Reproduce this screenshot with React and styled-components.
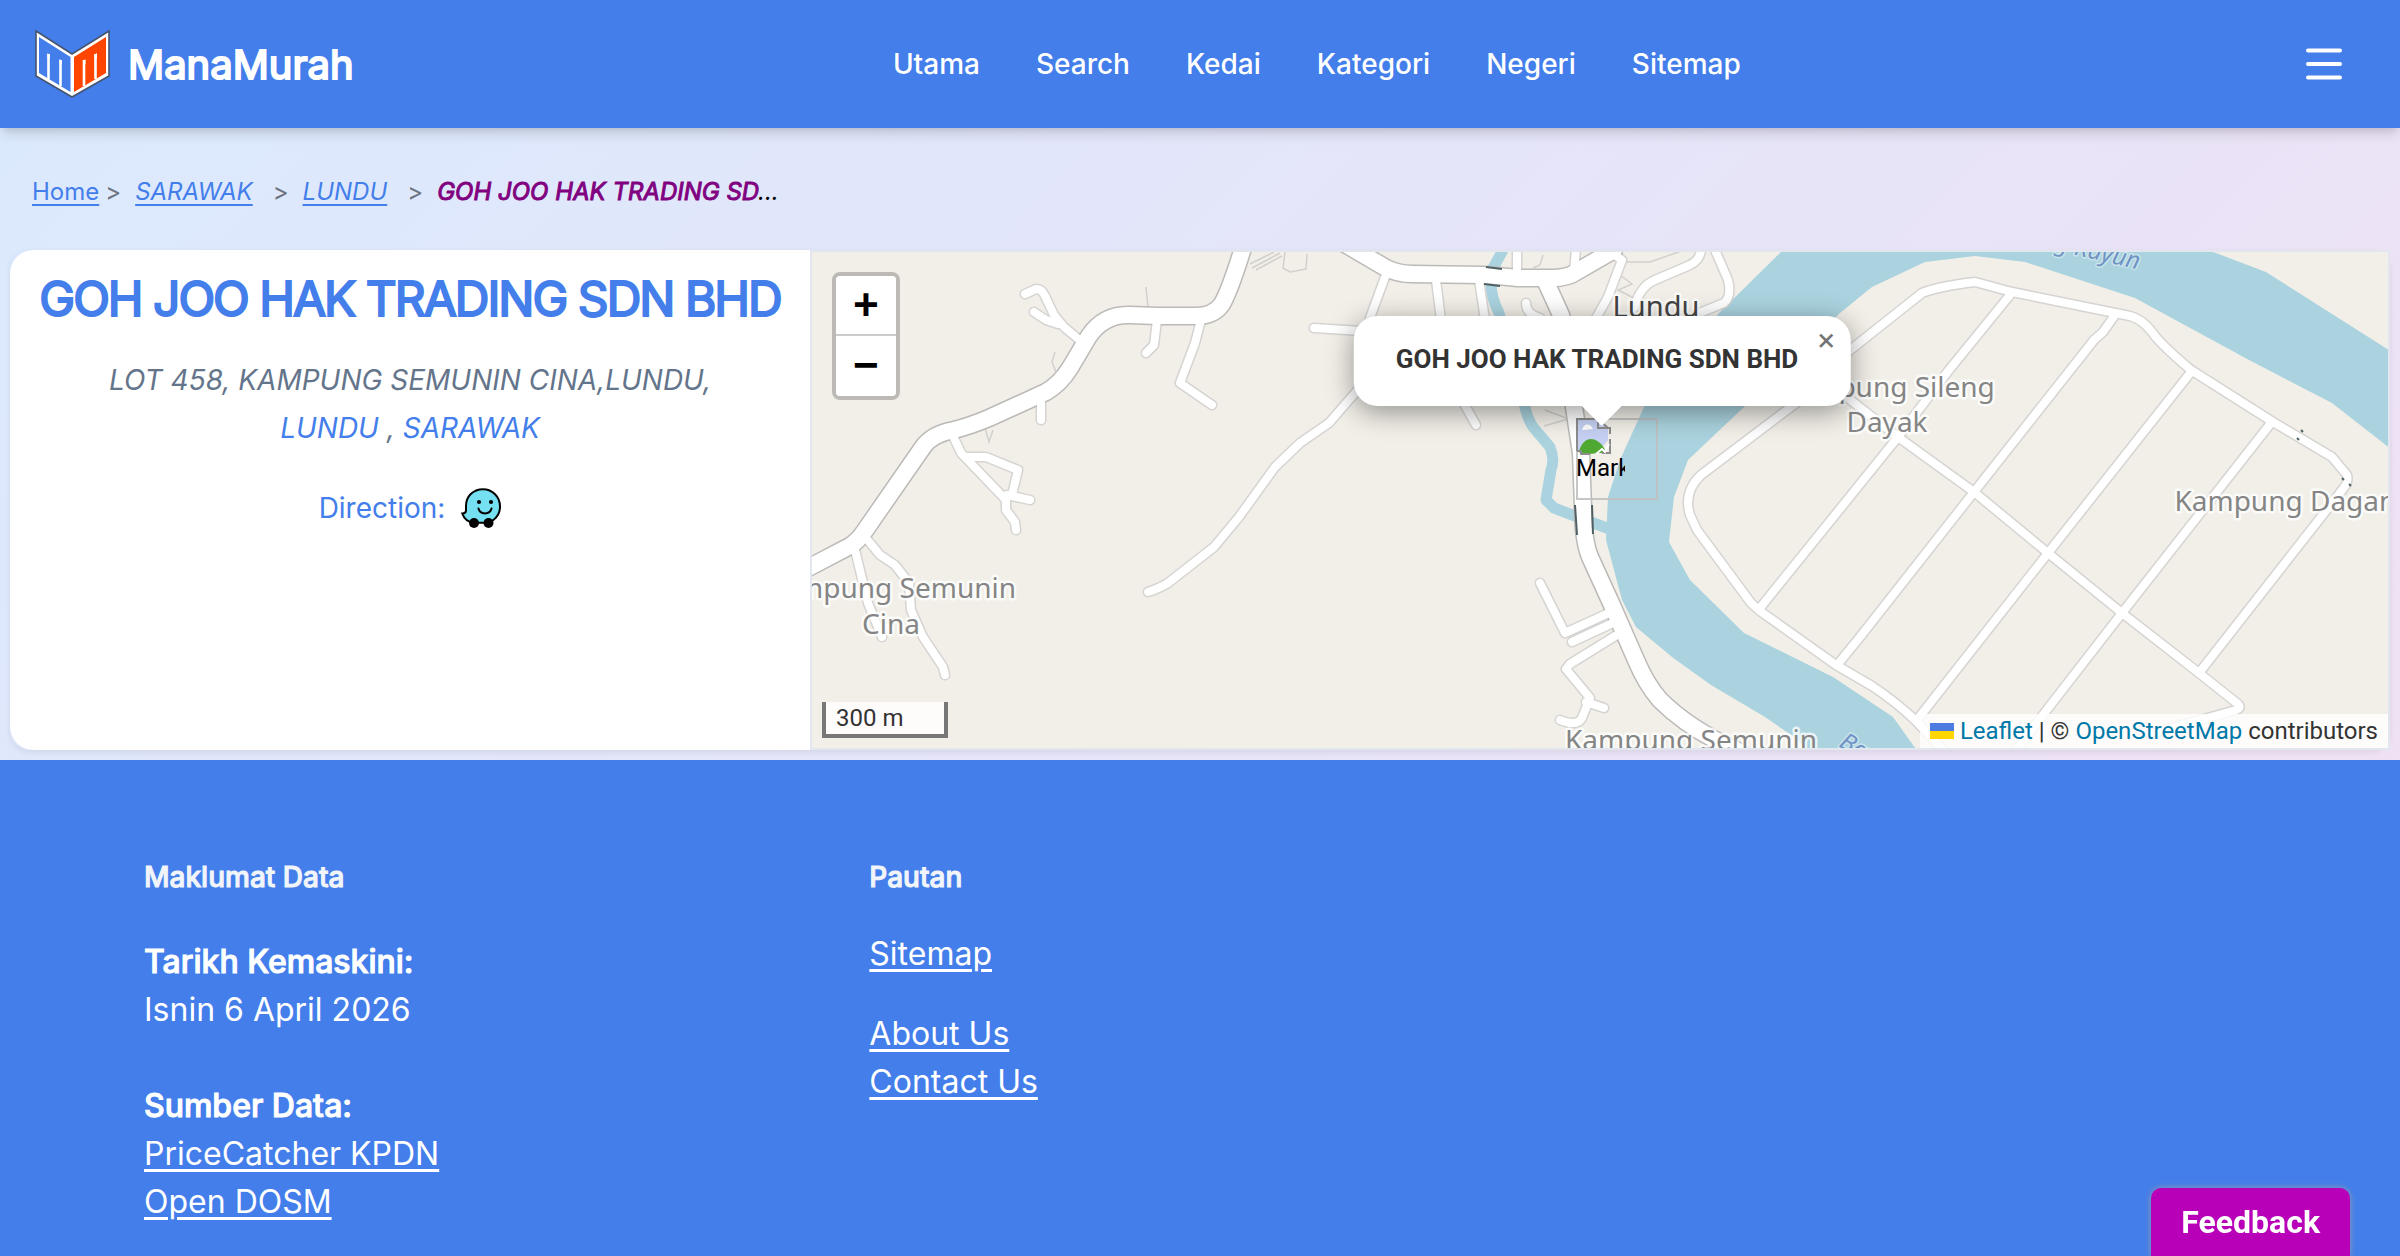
import React from "react";
import styled, { createGlobalStyle, css } from "styled-components";

const blue = "#437eeb";
const ui = `Inter, "Noto Sans", sans-serif`;
const mapUi = `Roboto, "Liberation Sans", sans-serif`;

/* Bold drawn on a lighter cut, so that it keeps the lighter cut's widths. */
const heavy = css`
  font-weight: ${(p) => p.$weight || 400};
  -webkit-text-stroke: ${(p) => p.$stroke || 1}px currentColor;
`;

const GlobalStyle = createGlobalStyle`
  *, *::before, *::after { box-sizing: border-box; }
  body { margin: 0; font-family: ${ui}; color: #000; }
  h1, h2, p, ol, ul, address { margin: 0; padding: 0; }
  ol, ul { list-style: none; }
`;

const Page = styled.div`
  min-height: 100vh;
  display: flex;
  flex-direction: column;
  background: linear-gradient(135deg, #dbeafe 0%, #e0e7fb 25%, #f3e0f3 100%);
`;

const Header = styled.header`
  height: 128px;
  padding: 0 32px;
  display: flex;
  justify-content: space-between;
  align-items: center;
  background: ${blue};
  box-shadow: 0 8px 12px -2px rgba(0, 0, 0, 0.12), 0 4px 8px -4px rgba(0, 0, 0, 0.12);
`;

const Brand = styled.a`
  display: flex;
  align-items: center;
  gap: 16px;
  color: #fff;
  font-size: 40px;
  text-decoration: none;
  ${heavy}
`;

const Nav = styled.nav`
  display: flex;
  gap: 56px;
`;

const NavLink = styled.a`
  color: #fff;
  font-size: 28px;
  font-weight: 500;
  line-height: 40px;
  text-decoration: none;
`;

const MenuButton = styled.button`
  display: flex;
  padding: 0 24px;
  border: 0;
  background: none;
  color: #fff;
  cursor: pointer;
`;

const Breadcrumb = styled.nav`
  padding: 44px 32px 38px;
  font-size: 24px;
  line-height: 40px;
`;

const Crumbs = styled.ol`
  display: flex;
`;

const Crumb = styled.li`
  font-style: ${(p) => (p.$italic ? "italic" : "normal")};
  &:not(:first-child)::before {
    content: ">";
    margin: 0 14px 0 ${(p) => (p.$first ? 6 : 20)}px;
    color: #6b7280;
    font-style: normal;
  }
`;

const CrumbLink = styled.a`
  color: ${blue};
  text-underline-offset: 4px;
`;

const CurrentCrumb = styled.span`
  color: #000;
  b {
    color: purple;
    ${heavy}
  }
`;

const Shop = styled.main`
  display: flex;
  margin: 0 10px 10px;
  border-radius: 20px;
  box-shadow: 0 2px 6px rgba(0, 0, 0, 0.08);
`;

const ShopCard = styled.section`
  flex: 0 0 calc(100vw / 3);
  min-width: 0;
  padding: 16px;
  border-radius: 24px 0 0 24px;
  background: #fff;
  text-align: center;
`;

const ShopName = styled.h1`
  color: ${blue};
  font-size: 48px;
  line-height: 66px;
  letter-spacing: -2px;
  white-space: nowrap;
  ${heavy}
`;

const Address = styled.address`
  margin-top: 24px;
  color: #64748b;
  font-size: 28px;
  line-height: 48px;
  a {
    color: ${blue};
    text-decoration: none;
  }
`;

const Direction = styled.p`
  margin-top: 32px;
  display: flex;
  align-items: center;
  justify-content: center;
  gap: 16px;
  color: ${blue};
  font-size: 28px;
  line-height: 48px;
  a {
    display: flex;
  }
`;

const MapFrame = styled.section`
  position: relative;
  flex: 1;
  height: 500px;
  border: 2px solid #e2e6ee;
  overflow: hidden;
  background: #f2efe8;
  font-family: ${mapUi};
  font-size: 24px;
`;

const MapDrawing = styled.svg`
  display: block;
  width: 100%;
  height: 100%;
`;

const ZoomControl = styled.div`
  position: absolute;
  top: 20px;
  left: 20px;
  border: 4px solid rgba(0, 0, 0, 0.22);
  border-radius: 8px;
  background-clip: padding-box;
`;

const ZoomButton = styled.button`
  display: block;
  width: 60px;
  height: 60px;
  padding: 4px 0 0;
  border: 0;
  border-radius: ${(p) => (p.$top ? "4px 4px 0 0" : "0 0 4px 4px")};
  ${(p) =>
    p.$top &&
    css`
      border-bottom: 2px solid #ccc;
    `}
  background: #fff;
  color: #000;
  font: bold 44px/56px "Liberation Mono", monospace;
  cursor: pointer;
`;

const Scale = styled.div`
  position: absolute;
  left: 10px;
  bottom: 10px;
  width: 126px;
  height: 36px;
  padding: 0 10px;
  border: 4px solid #777;
  border-top: 0;
  background: rgba(255, 255, 255, 0.8);
  color: #333;
  line-height: 32px;
`;

const Attribution = styled.div`
  position: absolute;
  right: 0;
  bottom: 0;
  padding: 0 10px;
  background: rgba(255, 255, 255, 0.8);
  color: #333;
  line-height: 34px;
  a {
    color: #0078a8;
    text-decoration: none;
  }
  svg {
    margin-right: 6px;
  }
`;

const Marker = styled.div`
  position: absolute;
  top: 166px;
  left: calc(50% - 24px);
  width: 82px;
  height: 82px;
  border: 2px solid rgba(192, 192, 192, 0.9);
  color: #000;
  line-height: 28px;
  svg {
    display: block;
    margin: -2px 0 -2px -2px;
  }
`;

const MarkerAlt = styled.span`
  display: block;
  width: 49px;
  margin-left: -2px;
  overflow: hidden;
`;

const Popup = styled.div`
  position: absolute;
  top: 64px;
  left: calc(50% + 2px);
  transform: translateX(-50%);
  padding: 24px 52px 28px 42px;
  border-radius: 24px;
  background: #fff;
  box-shadow: 0 6px 28px rgba(0, 0, 0, 0.4);
  color: #333;
  font-size: 26px;
  font-weight: 700;
  line-height: 38px;
  white-space: nowrap;
  &::after {
    content: "";
    position: absolute;
    top: 100%;
    left: calc(50% - 20px);
    border: 20px solid transparent;
    border-top-color: #fff;
    border-bottom: 0;
  }
`;

const CloseButton = styled.button`
  position: absolute;
  top: 0;
  right: 0;
  width: 48px;
  height: 48px;
  padding: 0;
  border: 0;
  background: none;
  color: #757575;
  font: 32px/48px ${mapUi};
  cursor: pointer;
`;

const Footer = styled.footer`
  flex: 1;
  display: grid;
  grid-template-columns: repeat(3, 1fr);
  align-content: start;
  gap: 64px;
  padding: 96px 144px 24px;
  background: ${blue};
  color: #fff;
  font-size: 32px;
  line-height: 48px;
`;

const FooterTitle = styled.h2`
  margin-bottom: ${(p) => p.$space}px;
  color: #f1f5f9;
  font-size: 28px;
  line-height: 42px;
  ${heavy}
`;

const FooterBlock = styled.div`
  display: flex;
  flex-direction: column;
  align-items: flex-start;
  &:not(:first-of-type) {
    margin-top: ${(p) => p.$gap}px;
  }
`;

const FooterLabel = styled.strong`
  ${heavy}
`;

const FooterLink = styled.a`
  color: #fff;
  text-underline-offset: 4px;
`;

const FeedbackButton = styled.button`
  position: fixed;
  right: 50px;
  bottom: 0;
  height: 68px;
  padding: 0 30px;
  border: 0;
  border-radius: 10px 10px 0 0;
  background: #b800b8;
  box-shadow: 0 0 6px rgba(160, 160, 160, 0.9);
  color: #fff;
  font: 700 32px/68px ${mapUi};
  cursor: pointer;
`;

const Logo = () => (
  <svg width="80" height="72" viewBox="0 1 80 72" aria-hidden="true">
    <path d="M4 4 40 27 77 4V49L40 70 4 49Z" fill="#fff" stroke="#45556f" strokeWidth="1.6" />
    <path d="M7 10 38.500 30V65L7 46Z" fill={blue} />
    <path d="M42 30 74 10V46L42 65Z" fill="#ff4500" />
    <path d="M16.500 52V27M28.500 59V33M52 59V33M63.500 52V27" stroke="#fff" strokeWidth="2.600" />
    <path d="M15.500 26 18 28V31H15.500ZM27.500 32 30 34V37H27.500ZM53.500 32 51 34V37H53.500ZM65 26 62.500 28V31H65Z" fill="#fff" />
  </svg>
);

const MenuIcon = () => (
  <svg width="40" height="32" viewBox="0 0 40 32" aria-hidden="true">
    <path d="M4 2.500H36M4 16H36M4 29.500H36" stroke="currentColor" strokeWidth="4" strokeLinecap="round" />
  </svg>
);

const WazeIcon = () => (
  <svg width="40" height="40" viewBox="0 0 40 40" aria-hidden="true">
    <path
      d="M22 1.200C12 1.200 5 8.500 5 18V22.500C5 24.500 3.500 25.500 1.300 25.500 3 30.500 7 34 12.500 34.800H24C32.500 34.500 39 27.500 39 18.500 39 9 31.500 1.200 22 1.200Z"
      fill="#75e0f2"
      stroke="#000"
      strokeWidth="2"
    />
    <circle cx="13" cy="35" r="5" />
    <circle cx="27.500" cy="35" r="5" />
    <circle cx="18" cy="14" r="2.100" />
    <circle cx="30" cy="14" r="2.100" />
    <path d="M17.500 20.500C19 27 29 27 30.500 20.500" fill="none" stroke="#000" strokeWidth="2" strokeLinecap="round" />
  </svg>
);

const BrokenImage = () => (
  <svg width="36" height="38" viewBox="0 0 36 38" aria-hidden="true">
    <path d="M1 1H22L32 10V22L22 34H1Z" fill="#c5d0f2" />
    <path d="M6 12C8 5 14 5 17 11Z" fill="#fff" />
    <path d="M3 34C5 25 10 21 15 21S26 25 29 32L26 35H22L14 36H5Z" fill="#4fa832" />
    <path d="M1 33V1H22V10H34V16M34 21V35H26M1 33H5V36H14M22 1 32 10" fill="none" stroke="#8c8c8c" strokeWidth="2" />
    <path d="M20 36 26 31 29 34 33 26" stroke="#fff" strokeWidth="2" fill="none" />
  </svg>
);

const Flag = () => (
  <svg width="24" height="16" viewBox="0 0 12 8" aria-hidden="true">
    <path fill="#4c7be1" d="M0 0h12v4H0z" />
    <path fill="#ffd500" d="M0 4h12v4H0z" />
  </svg>
);

const mainRoads = [
  "M806 569 850 546Q858 541 864 532L923 447Q932 434 954 430 970 426 989 418L1046 392Q1060 384 1070 368L1089 336Q1104 314 1130 315L1157 316H1196Q1214 316 1222 304 1230 290 1243 248",
  "M1345 244 1386 268Q1398 274 1412 274L1483 275Q1500 276 1518 278H1552Q1568 278 1576 272L1614 250",
  "M1545 280 1561 315 1574 370V407L1581 453 1583 507Q1583 540 1590 557L1611 603 1636 660Q1646 684 1660 700 1690 730 1740 752",
];

const sideRoads = [
  "M1025 294 1036 289Q1042 289 1045 296L1054 315 1064 327 1082 342",
  "M1034 312 1046 320 1058 324",
  "M1157 320 1154 345 1146 353",
  "M1201 320 1195 343 1180 383 1212 405",
  "M1041 398V420",
  "M954 438 961 453 1006 500V510L1015 522 1016 530",
  "M966 457H986L1018 470 1012 495M1007 495 1030 500",
  "M866 538 880 555 895 565 909 583 911 610 923 637 943 667 945 675",
  "M855 550 868 603 882 637",
  "M1148 592Q1160 588 1168 583L1214 547 1239 517 1275 467 1300 443 1329 423 1362 385",
  "M1314 328 1362 331",
  "M1385 277 1370 318M1436 280 1441 320M1479 280 1485 320",
  "M1526 303Q1526 314 1540 318",
  "M1517 250V272M1576 250 1574 270M1611 253 1622 260 1608 297 1595 320",
  "M1701 250Q1700 260 1690 265L1655 280Q1640 286 1634 308",
  "M1715 250 1728 280Q1732 296 1724 303L1697 314",
  "M1462 400 1476 425",
  "M1540 583 1565 633 1611 612M1572 642 1615 622M1620 633 1570 664 1566 669 1590 698 1582 718Q1577 727 1560 720M1586 702 1604 708",
  "M1830 366 1922 293Q1940 286 1975 282L2012 292 2130 316Q2142 319 2152 332 2160 344 2191 370L2273 422 2332 457 2347 475Q2349 482 2343 489L2199 673",
  "M1800 400 1701 475Q1683 492 1690 515L1697 530 1751 603 1760 611 1836 665 1872 686Q1896 702 1915 720L1945 752",
  "M2010 295 1949 370 1898 437 1760 608",
  "M2115 315 2103 332 2094 340 1974 492 1860 637 1838 664",
  "M2191 372 2048 553 1917 720",
  "M2271 423 2122 613 2039 720 2015 752",
  "M1835 388 1898 437 1974 492 2048 553 2122 613 2199 673 2238 704Q2242 708 2236 710L2150 734",
];

const places = [
  { text: "Kampung Semunin", x: 890, y: 598 },
  { text: "Cina", x: 891, y: 634 },
  { text: "Kampung Semunin", x: 1691, y: 750 },
  { text: "Kampung Sileng", x: 1887, y: 397 },
  { text: "Dayak", x: 1887, y: 432 },
  { text: "Kampung Dagang", x: 2294, y: 511 },
];

const MapTiles = () => (
  <MapDrawing viewBox="812 252 1576 496" preserveAspectRatio="xMidYMid slice" role="img" aria-label="Map of Lundu">
    <path
      d="M1783 250 1719 313 1644 407 1620 460 1608 497 1606 540 1622 600 1636 627 1672 657 1711 685 1765 717 1794 737 1810 752H1918L1893 717 1860 695 1833 677 1744 633 1690 580 1669 542 1674 497 1688 460 1744 407 1840 313 1872 287 1925 262 1975 256 2025 262 2135 298 2249 360 2332 403 2392 450V352L2266 272 2208 250Z"
      fill="#aad3df"
    />
    <path
      d="M1503 250 1492 270Q1488 292 1499 313L1524 403Q1527 418 1533 427L1550 447Q1555 460 1551 470L1546 500 1554 508 1612 530"
      fill="none"
      stroke="#aad3df"
      strokeWidth="11"
      strokeLinejoin="round"
    />
    <g fill="none" stroke="#d2d0cd" strokeWidth="1.500">
      <path d="M1250 264 1274 252M1252 268 1280 253M1256 270 1282 256M1285 252 1283 268 1290 272 1306 269 1307 254M1146 287 1148 308M1055 352 1052 362 1056 372M985 428 989 442 993 430" />
      <path d="M1533 268 1540 265 1543 255M1625 262 1650 262 1690 248M1620 275 1632 284 1618 290 1634 298M1545 410 1566 418M1544 426 1572 418" />
    </g>
    <g fill="none" strokeLinecap="round" strokeLinejoin="round">
      {sideRoads.map((d) => (
        <path key={d} d={d} stroke="#d6d4d2" strokeWidth="11" />
      ))}
      {mainRoads.map((d) => (
        <path key={d} d={d} stroke="#bcbab8" strokeWidth="19" />
      ))}
      {sideRoads.map((d) => (
        <path key={d} d={d} stroke="#fff" strokeWidth="8" />
      ))}
      {mainRoads.map((d) => (
        <path key={d} d={d} stroke="#fff" strokeWidth="16" />
      ))}
    </g>
    <path
      d="M1486 267 1502 269M1484 284 1500 286M1575 505 1577 535M1592 505 1593 534M2301 430 2303 432M2297 438 2299 440M2342 478 2344 480M2349 484 2351 486"
      stroke="#4f6065"
      strokeWidth="2"
      fill="none"
    />
    <g
      fontFamily='"Noto Sans", sans-serif'
      fontSize="28"
      textAnchor="middle"
      paintOrder="stroke"
      stroke="rgba(255,255,255,0.75)"
      strokeWidth="5"
      strokeLinejoin="round"
    >
      {places.map((p) => (
        <text key={p.x + "-" + p.y} x={p.x} y={p.y} fill="#858585">
          {p.text}
        </text>
      ))}
      <text x="1656" y="317" fontSize="29" fill="#444">
        Lundu
      </text>
      <g fill="#6f93c4" fontSize="24" fontStyle="italic" stroke="rgba(255,255,255,0.4)" strokeWidth="3">
        <text transform="translate(2054 250) rotate(13)" textAnchor="start" x="0" y="0">
          g Kayun
        </text>
        <text transform="translate(1838 746) rotate(30)" textAnchor="start" x="0" y="0">
          Ba
        </text>
      </g>
    </g>
  </MapDrawing>
);

const navItems = ["Utama", "Search", "Kedai", "Kategori", "Negeri", "Sitemap"];

export default function App() {
  return (
    <>
      <GlobalStyle />
      <Page>
        <Header>
          <Brand href="#" $stroke={2}>
            <Logo />
            ManaMurah
          </Brand>
          <Nav aria-label="Main">
            {navItems.map((item) => (
              <NavLink key={item} href="#">
                {item}
              </NavLink>
            ))}
          </Nav>
          <MenuButton type="button" aria-label="Menu">
            <MenuIcon />
          </MenuButton>
        </Header>

        <Breadcrumb aria-label="Breadcrumb">
          <Crumbs>
            <Crumb>
              <CrumbLink href="#">Home</CrumbLink>
            </Crumb>
            <Crumb $italic $first>
              <CrumbLink href="#">SARAWAK</CrumbLink>
            </Crumb>
            <Crumb $italic>
              <CrumbLink href="#">LUNDU</CrumbLink>
            </Crumb>
            <Crumb $italic>
              <CurrentCrumb>
                <b>GOH JOO HAK TRADING SD</b>...
              </CurrentCrumb>
            </Crumb>
          </Crumbs>
        </Breadcrumb>

        <Shop>
          <ShopCard>
            <ShopName $stroke={2}>GOH JOO HAK TRADING SDN BHD</ShopName>
            <Address>
              LOT 458, KAMPUNG SEMUNIN CINA,LUNDU,
              <br />
              <a href="#">LUNDU</a> , <a href="#">SARAWAK</a>
            </Address>
            <Direction>
              Direction:
              <a href="#" aria-label="Waze">
                <WazeIcon />
              </a>
            </Direction>
          </ShopCard>
          <MapFrame aria-label="Map">
            <MapTiles />
            <Marker>
              <BrokenImage />
              <MarkerAlt>Marker</MarkerAlt>
            </Marker>
            <Popup>
              GOH JOO HAK TRADING SDN BHD
              <CloseButton type="button" aria-label="Close popup">
                ×
              </CloseButton>
            </Popup>
            <ZoomControl>
              <ZoomButton type="button" $top aria-label="Zoom in">
                +
              </ZoomButton>
              <ZoomButton type="button" aria-label="Zoom out">
                −
              </ZoomButton>
            </ZoomControl>
            <Scale>300 m</Scale>
            <Attribution>
              <a href="#">
                <Flag />
                Leaflet
              </a>{" "}
              | © <a href="#">OpenStreetMap</a> contributors
            </Attribution>
          </MapFrame>
        </Shop>

        <Footer>
          <section>
            <FooterTitle $weight={500} $space={40}>
              Maklumat Data
            </FooterTitle>
            <FooterBlock>
              <FooterLabel $weight={500}>Tarikh Kemaskini:</FooterLabel>
              <span>Isnin 6 April 2026</span>
            </FooterBlock>
            <FooterBlock $gap={48}>
              <FooterLabel $weight={500}>Sumber Data:</FooterLabel>
              <FooterLink href="#">PriceCatcher KPDN</FooterLink>
              <FooterLink href="#">Open DOSM</FooterLink>
            </FooterBlock>
          </section>
          <section>
            <FooterTitle $weight={500} $space={32}>
              Pautan
            </FooterTitle>
            <FooterBlock>
              <FooterLink href="#">Sitemap</FooterLink>
            </FooterBlock>
            <FooterBlock $gap={32}>
              <FooterLink href="#">About Us</FooterLink>
              <FooterLink href="#">Contact Us</FooterLink>
            </FooterBlock>
          </section>
        </Footer>
        <FeedbackButton type="button">Feedback</FeedbackButton>
      </Page>
    </>
  );
}
